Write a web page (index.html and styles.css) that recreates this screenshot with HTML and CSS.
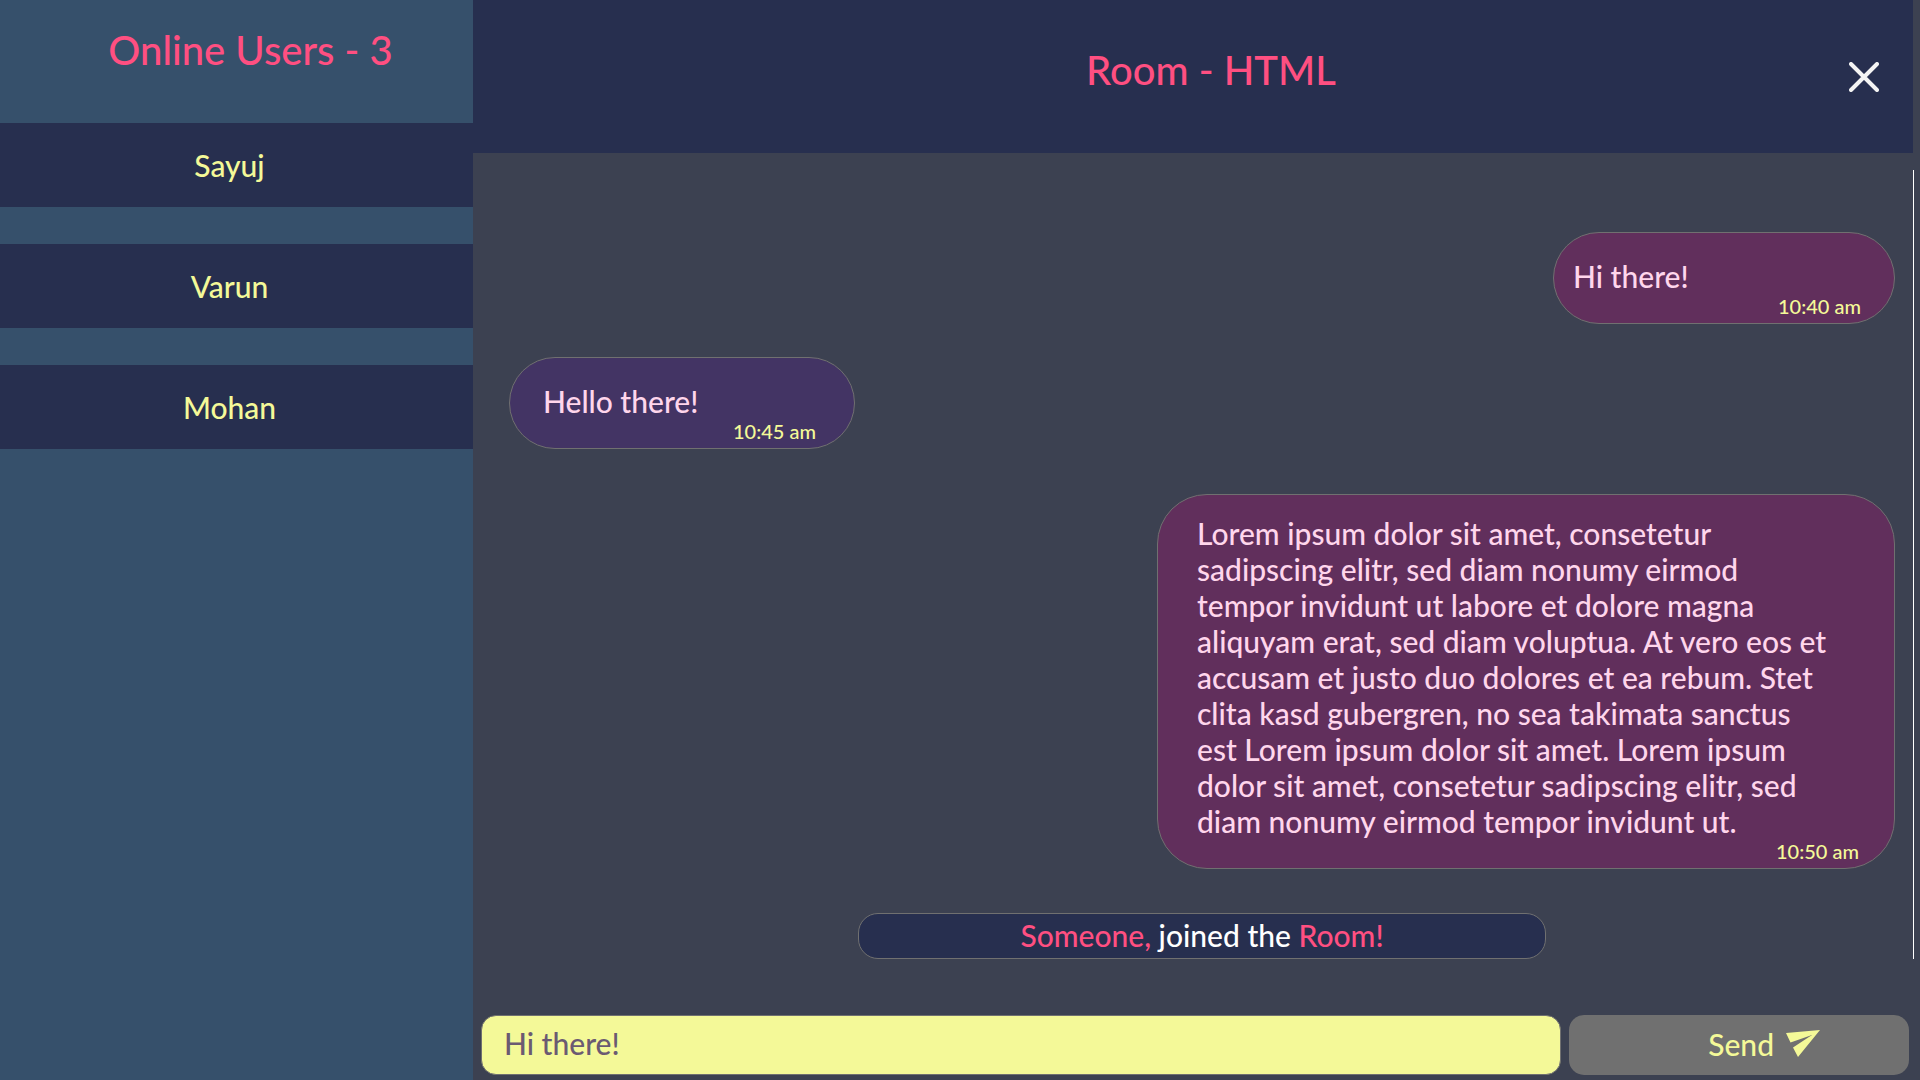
FILE: index.html
```html
<!DOCTYPE html>
<html lang="en">
<head>
<meta charset="utf-8">
<meta name="viewport" content="width=device-width, initial-scale=1">
<title>Room - HTML</title>
<link rel="stylesheet" href="styles.css">
</head>
<body>
<div class="app">
  <aside class="sidebar">
    <h2 class="title">Online Users - 3</h2>
    <ul class="users">
      <li class="user">Sayuj</li>
      <li class="user">Varun</li>
      <li class="user">Mohan</li>
    </ul>
  </aside>
  <main class="chat">
    <header class="room">
      <h1 class="title">Room - HTML</h1>
      <button class="close" type="button" aria-label="Leave room">
        <svg width="30" height="30" viewBox="0 0 30 30" aria-hidden="true"><path d="M2 2l26 26M28 2L2 28" stroke="currentColor" stroke-width="4" stroke-linecap="round" fill="none"/></svg>
      </button>
    </header>
    <section class="messages">
      <article class="message sent">
        <p class="text">Hi there!</p>
        <time class="time">10:40 am</time>
      </article>
      <article class="message received">
        <p class="text">Hello there!</p>
        <time class="time">10:45 am</time>
      </article>
      <article class="message sent long">
        <p class="text">Lorem ipsum dolor sit amet, consetetur<br>sadipscing elitr, sed diam nonumy eirmod<br>tempor invidunt ut labore et dolore magna<br>aliquyam erat, sed diam voluptua. At vero eos et<br>accusam et justo duo dolores et ea rebum. Stet<br>clita kasd gubergren, no sea takimata sanctus<br>est Lorem ipsum dolor sit amet. Lorem ipsum<br>dolor sit amet, consetetur sadipscing elitr, sed<br>diam nonumy eirmod tempor invidunt ut.</p>
        <time class="time">10:50 am</time>
      </article>
      <p class="notice"><span class="accent">Someone,</span> joined the <span class="accent">Room!</span></p>
    </section>
    <form class="composer">
      <input class="entry" type="text" value="Hi there!" aria-label="Message">
      <button class="send" type="button">Send
        <svg width="34" height="27" viewBox="0 0 34 27" aria-hidden="true"><path d="M0 3L34 0 12 27 7 17.500 26 5 4.500 12.500z" fill="currentColor"/></svg>
      </button>
    </form>
  </main>
</div>
</body>
</html>
```
FILE: styles.css
```css
* {
  box-sizing: border-box;
}

body {
  margin: 0;
  background: #3c4151;
  color: #fff;
  font: 500 30px/36px Lato, "Open Sans", sans-serif;
}

h1, h2, p, ul {
  margin: 0;
  padding: 0;
}

button, input {
  font: inherit;
}

.app {
  display: grid;
  grid-template-columns: 473px 1fr;
  min-height: 100vh;
}

.title {
  color: #ff4f81;
  font-size: 40px;
  font-weight: 500;
  line-height: 48px;
  text-align: center;
}

.sidebar {
  padding-top: 26px;
  background: #36506b;
}

.sidebar .title {
  padding-left: 28px;
}

.users {
  display: grid;
  gap: 37px;
  margin-top: 49px;
  list-style: none;
}

.user {
  padding: 24px 14px 24px 0;
  background: #272f4f;
  color: #f4f998;
  text-align: center;
}

.chat {
  display: flex;
  flex-direction: column;
  min-width: 0;
}

.room {
  display: grid;
  grid-template-columns: 1fr 30px;
  height: 153px;
  margin-right: 7px;
  padding: 46px 34px 0 100px;
  background: #272f4f;
}

.close {
  height: 30px;
  margin-top: 16px;
  padding: 0;
  border: 0;
  background: none;
  color: #f4f4f4;
}

.close svg {
  display: block;
}

.messages {
  display: flex;
  flex-direction: column;
  margin: 17px 6px 0 0;
  padding: 62px 18px 0 36px;
  border-right: 1px solid #fff;
}

.message {
  display: flex;
  flex-direction: column;
  border: 1px solid #707070;
  border-radius: 50px;
  color: #ffd6ec;
}

.sent {
  align-self: flex-end;
  width: 342px;
  padding: 25px 33px 5px 19px;
  background: #612f5c;
}

.received {
  width: 346px;
  margin-top: 33px;
  padding: 25px 38px 5px 33px;
  background: #433464;
}

.long {
  width: 738px;
  margin-top: 45px;
  padding: 20px 35px 5px 39px;
}

.time {
  align-self: flex-end;
  color: #f4f998;
  font-size: 20px;
  line-height: 24px;
}

.notice {
  align-self: center;
  width: 688px;
  margin-top: 44px;
  padding: 3px 4px 5px;
  border: 1px solid #707070;
  border-radius: 20px;
  background: #272f4f;
  text-align: center;
}

.accent {
  color: #ff4f81;
}

.composer {
  display: grid;
  grid-template-columns: 1fr 340px;
  gap: 8px;
  margin-top: auto;
  padding: 0 11px 5px 8px;
}

.entry {
  min-width: 0;
  height: 60px;
  padding: 0 22px 4px;
  border: 1px solid #707070;
  border-radius: 15px;
  background: #f4f998;
  color: #6b5a72;
}

.send {
  display: flex;
  align-items: center;
  justify-content: flex-end;
  gap: 12px;
  padding: 0 89px 3px 0;
  border: 0;
  border-radius: 15px;
  background: #707070;
  color: #f4f998;
}
```
